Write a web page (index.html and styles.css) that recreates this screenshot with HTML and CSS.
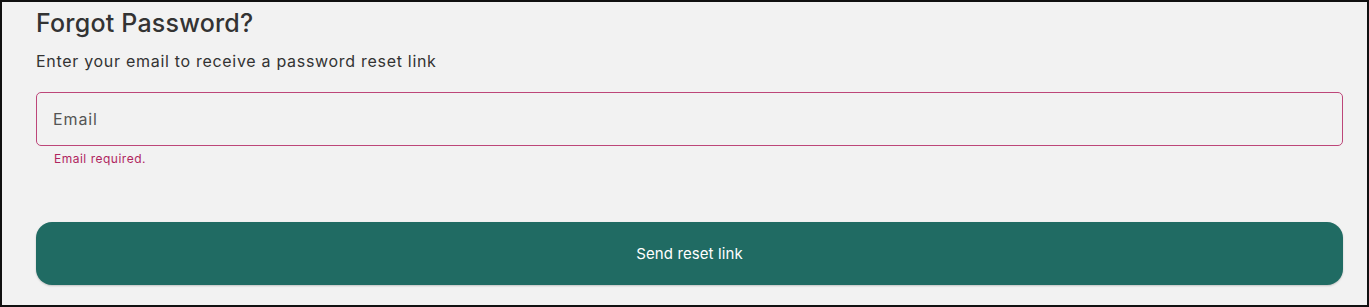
FILE: index.html
```html
<!DOCTYPE html>
<html lang="en">
<head>
    <meta charset="UTF-8" />
    <title>Forgot Password</title>
    <link rel="stylesheet" href="styles.css">
</head>
<body>

<div class="frame">
    <h1>Forgot Password?</h1>
    <p class="subtitle">Enter your email to receive a password reset link</p>

    <div class="field">
        <input type="email" id="email" placeholder="Email">
        <div class="error">Email required.</div>
    </div>

    <button class="send-btn">Send reset link</button>
</div>

</body>
</html>
```

FILE: styles.css
```css
* {
    box-sizing: border-box;
}

html, body {
    margin: 0;
    padding: 0;
}

body {
    font-family: Inter, "Noto Sans", sans-serif;
    color: #333;
}

.frame {
    height: 307px;
    width: 1369px;
    border: 2px solid #111;
    background: #f2f2f2;
    padding: 6px 24px 0 34px;
}

h1 {
    margin: 0;
    font-size: 25px;
    font-weight: 500;
    letter-spacing: 0.2px;
    line-height: 30px;
}

.subtitle {
    margin: 13px 0 0;
    font-size: 16px;
    letter-spacing: 0.7px;
    line-height: 20px;
    color: #333;
}

.field {
    margin-top: 21px;
}

.field input {
    display: block;
    width: 100%;
    height: 54px;
    border: 1.5px solid #bd4679;
    border-radius: 5px;
    background: #f2f2f2;
    padding: 0 16px;
    font-family: inherit;
    font-size: 16px;
    letter-spacing: 0.9px;
    color: #333;
    outline: none;
}

.field input::placeholder {
    color: #555;
}

.error {
    margin: 6px 0 0 18px;
    font-size: 12px;
    letter-spacing: 0.5px;
    line-height: 14px;
    color: #b0255f;
}

.send-btn {
    display: block;
    width: 100%;
    height: 63px;
    margin-top: 56px;
    border: none;
    border-radius: 16px;
    background: #206b63;
    color: #fff;
    font-family: inherit;
    font-size: 15px;
    letter-spacing: 0.1px;
    box-shadow: 0 1px 2px rgba(0, 0, 0, 0.2);
    cursor: pointer;
}
```
